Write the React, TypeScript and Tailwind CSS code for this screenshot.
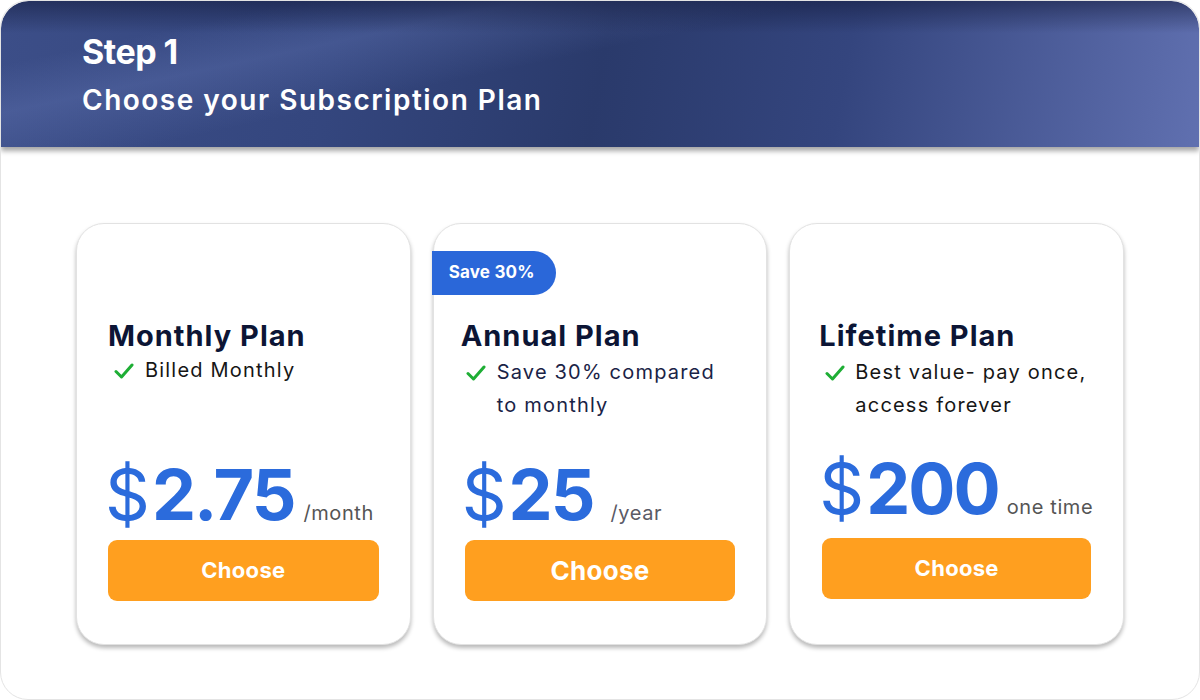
import React from "react";

const Check = () => (
  <svg width="20" height="18" viewBox="0 0 20 18" className="shrink-0">
    <polyline points="2,9.5 7.5,15 18,3" fill="none" stroke="#1eae35" strokeWidth="3" strokeLinecap="round" strokeLinejoin="round" />
  </svg>
);

export default function App() {
  return (
    <div className="w-[1200px] h-[700px] bg-white" style={{ fontFamily: "Inter, 'Noto Sans', sans-serif" }}>
      <div className="w-full h-full rounded-[28px] border border-[#e4e4e4] overflow-hidden bg-white flex flex-col">
        <div className="relative h-[146px] shrink-0 rounded-t-[28px] pl-[81px] pt-[31px] text-white shadow-[0_4px_5px_rgba(0,0,0,0.35)] bg-[linear-gradient(180deg,rgba(18,26,60,0.55)_0%,rgba(18,26,60,0)_22%),linear-gradient(168deg,rgba(0,0,0,0)_16%,rgba(110,130,195,0.28)_28%,rgba(0,0,0,0)_44%),linear-gradient(100deg,#3c4e88_0%,#34467e_28%,#2a3a6b_50%,#34457e_70%,#6070b0_100%)]">
          <div className="text-[34px] leading-[40px] font-bold tracking-[-0.5px]">Step 1</div>
          <div className="mt-[10px] text-[28px] leading-[36px] font-semibold tracking-[1.5px]">Choose your Subscription Plan</div>
        </div>

        <div className="grid grid-cols-3 gap-[22px] px-[75px] mt-[76px]">
          {/* Monthly */}
          <div className="h-[422px] rounded-[28px] border border-[#e2e2e2] bg-white shadow-[0_3px_4px_rgba(0,0,0,0.28)] flex flex-col px-[31px] pt-[27px] pb-[43px]">
            <div className="h-[44px]" />
            <div className="mt-[23px] text-[29px] leading-[36px] font-bold text-[#0c1535] tracking-[1px]">Monthly Plan</div>
            <div className="flex items-start gap-[11px] pl-[6px] mt-[0px] text-[20px] leading-[33px] text-[#161616] tracking-[1.2px]">
              <div className="pt-[8px]"><Check /></div>
              <span>Billed Monthly</span>
            </div>
            <div className="flex-1" />
            <div className="flex items-baseline h-[70px] leading-none text-[#2b6bdc] whitespace-nowrap">
              <span className="-ml-[3px] text-[70px] font-normal">$</span>
              <span className="ml-[2px] text-[70px] font-bold tracking-[-2px]">2.75</span>
              <span className="ml-[9px] text-[20px] text-[#555] tracking-[0.6px]">/month</span>
            </div>
            <button className="mt-[10px] h-[61px] w-full rounded-[9px] bg-[#ff9f1f] text-white text-[22px] font-bold tracking-[0.3px]">Choose</button>
          </div>

          {/* Annual */}
          <div className="h-[422px] rounded-[28px] border border-[#e2e2e2] bg-white shadow-[0_3px_4px_rgba(0,0,0,0.28)] flex flex-col px-[31px] pt-[27px] pb-[43px]">
            <div className="h-[44px] flex">
              <div className="-ml-[33px] h-[44px] w-[124px] rounded-r-[22px] bg-[#2a67d9] text-white text-[17px] font-bold flex items-center pl-[17px] tracking-[0.2px]">Save 30%</div>
            </div>
            <div className="mt-[23px] -ml-[4px] text-[29px] leading-[36px] font-bold text-[#0c1535] tracking-[1px]">Annual Plan</div>
            <div className="flex items-start gap-[11px] pl-[1px] mt-[2px] text-[20px] leading-[33px] text-[#1a2346] tracking-[1.2px]">
              <div className="pt-[8px]"><Check /></div>
              <span>Save 30% compared<br />to monthly</span>
            </div>
            <div className="flex-1" />
            <div className="flex items-baseline h-[70px] leading-none text-[#2b6bdc] whitespace-nowrap">
              <span className="-ml-[3px] text-[70px] font-normal">$</span>
              <span className="ml-[2px] text-[70px] font-bold tracking-[-2px]">25</span>
              <span className="ml-[17px] text-[20px] text-[#5a5a66] tracking-[0.6px]">/year</span>
            </div>
            <button className="mt-[10px] h-[61px] w-full rounded-[9px] bg-[#ff9f1f] text-white text-[26px] font-bold tracking-[0.3px]">Choose</button>
          </div>

          {/* Lifetime */}
          <div className="h-[422px] rounded-[28px] border border-[#e2e2e2] bg-white shadow-[0_3px_4px_rgba(0,0,0,0.28)] flex flex-col px-[32px] pt-[27px] pb-[45px]">
            <div className="h-[44px]" />
            <div className="mt-[23px] -ml-[3px] text-[29px] leading-[36px] font-bold text-[#0c1535] tracking-[1px]">Lifetime Plan</div>
            <div className="flex items-start gap-[10px] pl-[3px] mt-[2px] text-[20px] leading-[33px] text-[#161616] tracking-[1.2px]">
              <div className="pt-[8px]"><Check /></div>
              <span>Best value- pay once,<br />access forever</span>
            </div>
            <div className="flex-1" />
            <div className="flex items-baseline h-[70px] leading-none text-[#2b6bdc] whitespace-nowrap">
              <span className="-ml-[3px] text-[70px] font-normal">$</span>
              <span className="ml-[2px] text-[70px] font-bold tracking-[-2px]">200</span>
              <span className="ml-[8px] text-[20px] text-[#555] tracking-[0.6px]">one time</span>
            </div>
            <button className="mt-[14px] h-[61px] w-full rounded-[9px] bg-[#ff9f1f] text-white text-[22px] font-bold tracking-[0.3px]">Choose</button>
          </div>
        </div>
      </div>
    </div>
  );
}
